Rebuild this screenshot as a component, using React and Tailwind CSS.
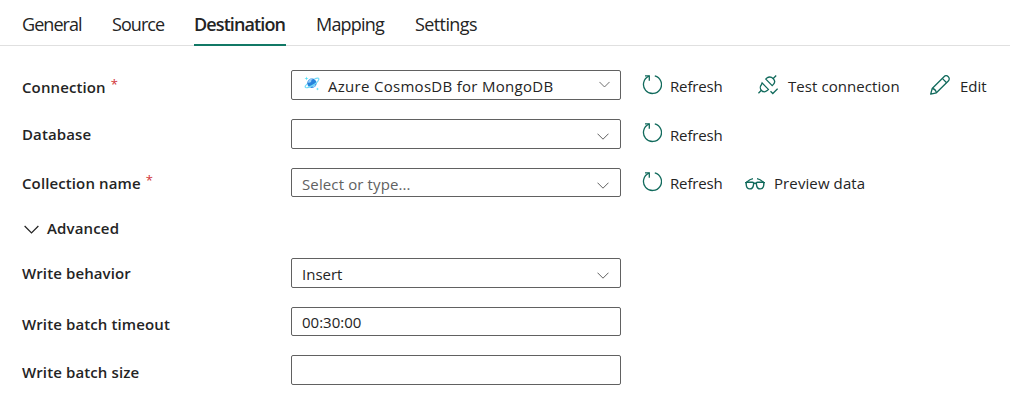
import React from "react";

function RefreshIcon() {
  return (
    <svg className="h-5 w-5 shrink-0" viewBox="0 0 20 20" fill="none" stroke="#116a5c" strokeWidth="1.3">
      <path d="M12.800 .8A9 9 0 1 1 7 1.200" />
      <path d="M3 .9H7.300V5.800" />
    </svg>
  );
}

function PlugIcon() {
  return (
    <svg className="h-5 w-5 shrink-0" viewBox="0 0 20 20" fill="none" stroke="#116a5c" strokeWidth="1.3">
      <path d="M.4 18.200l3-3M15 3.700l3.200-3.200" />
      <path d="M4.100 7.900l6.300 6.500-1.200 1.200c-1.700 1.500-4.200 1.400-5.700-.1s-1.600-4.100-.1-5.800z" />
      <path d="M7.800 4.100l6.400 6.500 1.200-1.200c1.500-1.700 1.400-4.200-.1-5.700S11.200 1.500 9 2.900z" />
      <path d="M12.500 16.200l2.300 2.300 4.800-4.800" />
    </svg>
  );
}

function PencilIcon() {
  return (
    <svg className="h-5 w-5 shrink-0" viewBox="0 0 20 20" fill="none" stroke="#116a5c" strokeWidth="1.3" strokeLinejoin="round">
      <path d="M.7 19.200L2.200 13.500 14 1.700c1.300-1.300 3.100-1.100 4.300 0s1.300 3 0 4.300L6.400 17.800z" />
      <path d="M12.300 3.400l4.300 4.300M2.200 13.500c1.900.3 3.800 2.100 4.200 4.300" />
    </svg>
  );
}

function GlassesIcon() {
  return (
    <svg className="h-5 w-5 shrink-0" viewBox="0 0 20 20" fill="none" stroke="#116a5c" strokeWidth="1.4">
      <path d="M1.600 8.300h5.800c1.200 0 1.400.8 1.200 2-.3 2.600-1.600 4.600-3.900 4.600s-3.300-1.900-3.500-4.400c-.1-1.200 0-1.800.4-2.200z" />
      <path d="M18.400 8.300h-5.800c-1.200 0-1.400.8-1.200 2 .3 2.600 1.600 4.600 3.900 4.600s3.300-1.900 3.500-4.400c.1-1.200 0-1.800-.4-2.200z" />
      <path d="M0 8.600h2M18 8.600h2M8.600 9.300h2.800M1.600 8.300C3.200 6.700 5 5 8 4.600M18.400 8.300C16.800 6.700 15 5 12 4.600" />
    </svg>
  );
}

function CosmosIcon() {
  return (
    <svg className="h-4 w-4 shrink-0" viewBox="0 0 16 16" fill="none">
      <circle cx="7.900" cy="7.200" r="4.700" fill="#2783dc" />
      <path d="M4 6.500c1.500.8 3.400-.3 3.300-1.500-.1-1 1.200-1.200 1.600-2.200C6.500 2 4 4 4 6.500zM8.500 11.300c-.3-1.600.8-2.500 2.400-2.200l1-.4c-.5 1.600-1.800 2.700-3.400 2.600z" fill="#93cdfa" />
      <path d="M10.500 2.900c3-1.300 4.700-1 4.300.5-.5 1.900-3.500 4.600-7 6.500s-6.300 2.400-6.600 1.200c-.2-.7.500-1.900 2-3.200" stroke="#72dcf8" strokeWidth="1.200" />
      <path d="M2.500.5L3 2l1.500.5L3 3l-.5 1.500L2 3 .5 2.500 2 2zM13.500 11.500l.4 1.100 1.100.4-1.100.4-.4 1.100-.4-1.100-1.100-.4 1.100-.4z" fill="#50e0f8" />
    </svg>
  );
}

function Chevron({ className }) {
  return (
    <svg className={className} viewBox="0 0 12 7" fill="none" stroke="currentColor">
      <path d="M.5.700L6 6.200 11.500.700" />
    </svg>
  );
}

function Label({ children, className, required }) {
  return (
    <div className={`flex w-[269px] shrink-0 items-start font-semibold tracking-[0.11px] ${className}`}>
      <span>{children}</span>
      {required && <span className="-mt-[3px] ml-[5px] text-[13px] font-normal tracking-normal text-[#d13438]">*</span>}
    </div>
  );
}

function Field({ children, className }) {
  return (
    <div className={`flex w-[330px] shrink-0 items-start rounded-[2px] border border-[#616161] pl-2.5 ${className}`}>
      {children}
    </div>
  );
}

function Action({ icon, children, className, textClass }) {
  return (
    <div className={`flex items-start gap-2 ${className}`}>
      {icon}
      <span className={textClass}>{children}</span>
    </div>
  );
}

export default function App() {
  return (
    <div className="h-[406px] w-[1010px] overflow-hidden bg-white font-['Open_Sans',sans-serif] text-[15px] leading-5 whitespace-nowrap text-[#242424]">
      <nav className="flex h-[46px] border-b border-[#e0e0e0] pl-[22px] text-[18px] leading-6 tracking-[-0.95px]">
        <div className="w-[90px] pt-3">General</div>
        <div className="w-[82px] pt-3">Source</div>
        <div className="h-[46px] w-[92px] border-b-2 border-[#117865] pt-3 font-semibold tracking-[-0.9px]">Destination</div>
        <div className="ml-[30px] w-[99px] pt-3 tracking-[-0.8px]">Mapping</div>
        <div className="pt-3 tracking-[-0.6px]">Settings</div>
      </nav>
      <main className="pt-6 pl-[22px]">
        <div className="flex h-[49px] items-start">
          <Label className="pt-[7px]" required>Connection</Label>
          <Field className="h-[30px]">
            <div className="pt-[5px] pl-[2px]"><CosmosIcon /></div>
            <span className="pt-[5px] pl-2 tracking-[0.29px]">Azure CosmosDB for MongoDB</span>
            <Chevron className="mt-[10px] mr-2.5 ml-auto h-[7px] w-[11px] text-[#616161]" />
          </Field>
          <Action className="ml-[21px] w-[116px] pt-[5px]" textClass="pt-px tracking-[-0.15px]" icon={<RefreshIcon />}>Refresh</Action>
          <Action className="w-[172px] gap-2.5 pt-[5px]" textClass="pt-px tracking-[0.07px]" icon={<PlugIcon />}>Test connection</Action>
          <Action className="gap-2.5 pt-[5px]" textClass="pt-px" icon={<PencilIcon />}>Edit</Action>
        </div>
        <div className="flex h-[49px] items-start">
          <Label className="pt-[5px] tracking-[-0.05px]">Database</Label>
          <Field className="h-[30px]">
            <Chevron className="mt-[13px] mr-[11px] ml-auto h-[7px] w-3 text-[#616161]" />
          </Field>
          <Action className="ml-[21px] pt-1" textClass="pt-[2px] tracking-[-0.15px]" icon={<RefreshIcon />}>Refresh</Action>
        </div>
        <div className="flex h-11 items-start">
          <Label className="pt-[5px]" required>Collection name</Label>
          <Field className="h-[29px]">
            <span className="pt-[5px] tracking-[0.12px] text-[#616161]">Select or type...</span>
            <Chevron className="mt-[13px] mr-[11px] ml-auto h-[7px] w-3 text-[#616161]" />
          </Field>
          <Action className="ml-[21px] w-[103px] pt-1" textClass="pt-px tracking-[-0.15px]" icon={<RefreshIcon />}>Refresh</Action>
          <Action className="gap-[9px] pt-1" textClass="pt-px tracking-[0.1px]" icon={<div className="pt-[2px]"><GlassesIcon /></div>}>Preview data</Action>
        </div>
        <div className="flex h-[46px] items-start pl-[2px] font-semibold">
          <Chevron className="mt-[13px] h-[9px] w-[15px]" />
          <span className="pt-1.5 pl-2 tracking-[0.15px]">Advanced</span>
        </div>
        <div className="flex h-[49px] items-start">
          <Label className="pt-[5px]">Write behavior</Label>
          <Field className="h-[30px]">
            <span className="pt-[5px]">Insert</span>
            <Chevron className="mt-[13px] mr-[11px] ml-auto h-[7px] w-3 text-[#616161]" />
          </Field>
        </div>
        <div className="flex h-12 items-start">
          <Label className="pt-[7px]">Write batch timeout</Label>
          <Field className="h-[29px]"><span className="pt-1">00:30:00</span></Field>
        </div>
        <div className="flex items-start">
          <Label className="pt-[7px]">Write batch size</Label>
          <Field className="h-[30px]" />
        </div>
      </main>
    </div>
  );
}
